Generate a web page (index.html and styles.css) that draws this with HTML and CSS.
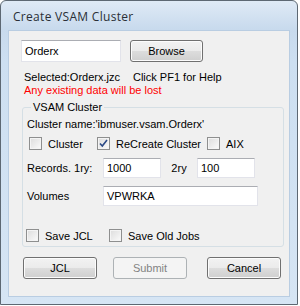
FILE: index.html
```html
<!DOCTYPE html>
<html lang="en">
<head>
    <meta charset="UTF-8">
    <title>Create VSAM Cluster</title>
    <link rel="stylesheet" href="styles.css">
</head>
<body>
    <div class="window">
        <div class="titlebar">Create VSAM Cluster</div>
        <div class="client">
            <div class="file-row">
                <div class="textbox file">Orderx</div>
                <div class="btn browse">Browse</div>
            </div>
            <div class="info">
                <span>Selected:Orderx.jzc</span>
                <span class="help">Click PF1 for Help</span>
            </div>
            <div class="warn">Any existing data will be lost</div>

            <fieldset class="group">
                <legend>VSAM Cluster</legend>
                <div class="cname">Cluster name:'ibmuser.vsam.Orderx'</div>
                <div class="checks">
                    <label class="check c-cluster"><span class="box"></span>Cluster</label>
                    <label class="check c-recreate">
                        <span class="box">
                            <svg width="11" height="11" viewBox="0 0 11 11"><path d="M2 5.5 L4.3 8 L9 2" fill="none" stroke="#2c4a86" stroke-width="1.6"/></svg>
                        </span>ReCreate Cluster
                    </label>
                    <label class="check c-aix"><span class="box"></span>AIX</label>
                </div>
                <div class="field-row">
                    <span class="lbl">Records. 1ry:</span>
                    <div class="textbox small">1000</div>
                    <span class="lbl2">2ry</span>
                    <div class="textbox small">100</div>
                </div>
                <div class="field-row">
                    <span class="lbl">Volumes</span>
                    <div class="textbox wide">VPWRKA</div>
                </div>
                <div class="checks saves">
                    <label class="check c-savejcl"><span class="box"></span>Save JCL</label>
                    <label class="check"><span class="box"></span>Save Old Jobs</label>
                </div>
            </fieldset>

            <div class="buttons">
                <div class="btn">JCL</div>
                <div class="btn disabled">Submit</div>
                <div class="btn">Cancel</div>
            </div>
        </div>
    </div>
</body>
</html>
```

FILE: styles.css
```css
html, body {
    margin: 0;
    padding: 0;
    background: #ffffff;
}
body {
    font-family: "Liberation Sans", Arial, sans-serif;
    font-size: 11px;
    color: #000;
}
.window {
    width: 298px;
    height: 305px;
    box-sizing: border-box;
    border: 1px solid #5d6873;
    border-radius: 6px 6px 0 0;
    background: linear-gradient(#dfeaf6, #c8daed 28px, #cddff1 60px, #d6e5f4);
    padding: 0 7px 7px 7px;
}
.titlebar {
    height: 29px;
    line-height: 31px;
    padding-left: 5px;
    font-family: "Open Sans", "Liberation Sans", sans-serif;
    font-size: 12px;
    letter-spacing: 0.3px;
    color: #2a2f36;
}
.client {
    height: 267px;
    box-sizing: border-box;
    background: #f0f0f0;
    border: 1px solid #b9cde2;
    padding: 9px 0 0 12px;
}
.file-row {
    display: flex;
    gap: 9px;
    height: 22px;
}
.textbox {
    box-sizing: border-box;
    background: #fff;
    border: 1px solid #e2e3ea;
    border-top-color: #abadb3;
    padding-left: 3px;
    display: flex;
    align-items: center;
}
.file {
    width: 100px;
    height: 22px;
}
.btn {
    box-sizing: border-box;
    height: 22px;
    border: 1px solid #707070;
    border-radius: 3px;
    background: linear-gradient(#f2f2f2, #ebebeb 50%, #dddddd 50%, #cfcfcf);
    display: flex;
    align-items: center;
    justify-content: center;
    box-shadow: inset 0 0 0 1px #fcfcfc;
}
.browse {
    width: 73px;
}
.info {
    margin-top: 9px;
    padding-left: 3px;
    line-height: 13px;
    display: flex;
}
.help {
    margin-left: 13px;
}
.warn {
    color: #ff0000;
    padding-left: 3px;
    line-height: 13px;
}
.group {
    margin: 4px 0 0 1px;
    width: 262px;
    height: 146px;
    box-sizing: border-box;
    border: 1px solid #d5dfe5;
    border-radius: 3px;
    padding: 4px 0 0 4px;
}
.group legend {
    padding: 0 2px;
    margin-left: 4px;
    line-height: 13px;
}
.cname {
    line-height: 13px;
}
.checks {
    display: flex;
    align-items: center;
    margin-top: 6px;
    height: 13px;
}
.check {
    display: flex;
    align-items: center;
    gap: 6px;
}
.box {
    width: 13px;
    height: 13px;
    box-sizing: border-box;
    border: 1px solid #8e8f8f;
    background: linear-gradient(135deg, #dcdcdc, #fbfbfb);
    box-shadow: inset 0 0 0 1px #f4f4f4;
    display: flex;
}
.c-cluster {
    margin-left: 2px;
    width: 68px;
}
.c-recreate {
    width: 110px;
}
.field-row {
    display: flex;
    align-items: center;
    margin-top: 8px;
}
.field-row .textbox {
    height: 20px;
}
.lbl {
    width: 76px;
}
.lbl2 {
    width: 36px;
    text-align: center;
}
.small {
    width: 58px;
}
.wide {
    width: 155px;
}
.saves {
    margin-top: 23px;
}
.c-savejcl {
    width: 83px;
    margin-left: -1px;
}
.buttons {
    display: flex;
    margin-top: 10px;
    padding-left: 2px;
}
.buttons .btn {
    width: 74px;
}
.buttons .btn + .btn {
    margin-left: 16px;
}
.buttons .disabled + .btn {
    margin-left: 20px;
}
.btn.disabled {
    border-color: #adb2b5;
    background: #f4f4f4;
    color: #838383;
    box-shadow: none;
}
```
